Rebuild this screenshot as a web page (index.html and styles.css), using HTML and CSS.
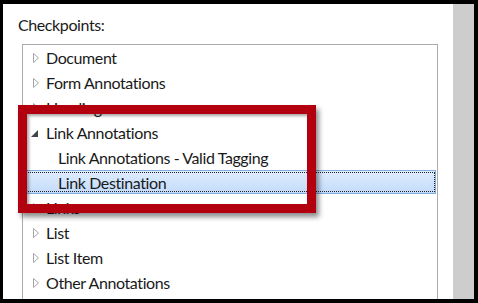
FILE: index.html
```html
<!DOCTYPE html>
<html lang="en">
<head>
    <meta charset="UTF-8">
    <meta name="viewport" content="width=device-width, initial-scale=1.0">
    <title>Checkpoints</title>
    <link rel="stylesheet" href="styles.css">
</head>
<body>

    <div class="frame">
        <div class="panel">
            <div class="main">
                <div class="label">Checkpoints:</div>

                <ul class="tree">
                    <li class="row"><span class="twisty"><svg width="6" height="10" viewBox="0 0 6 10"><polygon points="0.5,0.5 5.5,5 0.5,9.5" fill="#fff" stroke="#a6a6a6"/></svg></span>Document</li>
                    <li class="row"><span class="twisty"><svg width="6" height="10" viewBox="0 0 6 10"><polygon points="0.5,0.5 5.5,5 0.5,9.5" fill="#fff" stroke="#a6a6a6"/></svg></span>Form Annotations</li>
                    <li class="row"><span class="twisty"><svg width="6" height="10" viewBox="0 0 6 10"><polygon points="0.5,0.5 5.5,5 0.5,9.5" fill="#fff" stroke="#a6a6a6"/></svg></span>Headings</li>
                    <li class="row"><span class="twisty open"><svg width="7" height="7" viewBox="0 0 7 7"><polygon points="7,0 7,7 0,7" fill="#444"/></svg></span>Link Annotations</li>
                    <li class="row child">Link Annotations - Valid Tagging</li>
                    <li class="row child selected"><span class="focus">Link Destination</span></li>
                    <li class="row"><span class="twisty"><svg width="6" height="10" viewBox="0 0 6 10"><polygon points="0.5,0.5 5.5,5 0.5,9.5" fill="#fff" stroke="#a6a6a6"/></svg></span>Links</li>
                    <li class="row"><span class="twisty"><svg width="6" height="10" viewBox="0 0 6 10"><polygon points="0.5,0.5 5.5,5 0.5,9.5" fill="#fff" stroke="#a6a6a6"/></svg></span>List</li>
                    <li class="row"><span class="twisty"><svg width="6" height="10" viewBox="0 0 6 10"><polygon points="0.5,0.5 5.5,5 0.5,9.5" fill="#fff" stroke="#a6a6a6"/></svg></span>List Item</li>
                    <li class="row"><span class="twisty"><svg width="6" height="10" viewBox="0 0 6 10"><polygon points="0.5,0.5 5.5,5 0.5,9.5" fill="#fff" stroke="#a6a6a6"/></svg></span>Other Annotations</li>
                </ul>
            </div>
            <div class="side"></div>
        </div>

        <!-- highlight callout drawn over the tree -->
        <div class="callout"></div>
    </div>

</body>
</html>
```

FILE: styles.css
```css
body {
    margin: 0;
    background-color: #000;
    font-family: Lato, "Open Sans", sans-serif;
    letter-spacing: -0.4px;
}
.frame {
    position: relative;
    height: 303px;
    padding: 4px 4px 4px 3px;
    box-sizing: border-box;
    overflow: hidden;
}
.panel {
    display: flex;
    height: 295px;
    overflow: hidden;
}
.main {
    flex: 1;
    background-color: #fff;
    padding: 0 15px 0 19px;
}
.side {
    width: 21px;
    background-color: #cdcdcd;
}
.label {
    margin-left: -4px;
    padding-top: 11px;
    height: 29px;
    font-size: 16px;
    color: #1a1a1a;
}
.tree {
    list-style-type: none;
    margin: 0;
    padding: 0;
    height: 300px;
    border: 1px solid #ababab;
    border-bottom: none;
}
.row {
    display: flex;
    align-items: center;
    height: 25px;
    padding-left: 10px;
    font-size: 16px;
    color: #1a1a1a;
    white-space: nowrap;
}
.twisty {
    display: flex;
    align-items: center;
    width: 13px;
    height: 25px;
}
.twisty.open {
    margin-left: -2px;
    width: 15px;
    padding-top: 2px;
    box-sizing: border-box;
}
.row.child {
    padding-left: 35px;
}
.row.selected {
    box-sizing: border-box;
    height: 24px;
    margin: 0 1px 1px 1px;
    padding-left: 1px;
    border: 1px solid #84acdd;
    background: linear-gradient(#dfedfd, #c3dbfb);
}
.focus {
    flex: 1;
    display: flex;
    align-items: center;
    height: 18px;
    padding-left: 31px;
    border: 1px dotted #222;
}
.callout {
    position: absolute;
    left: 18px;
    top: 105px;
    width: 280px;
    height: 90px;
    border: 9px solid #b3000f;
    box-shadow: 3px 4px 5px rgba(0,0,0,0.45), inset 2px 2px 3px rgba(0,0,0,0.35);
}
```
